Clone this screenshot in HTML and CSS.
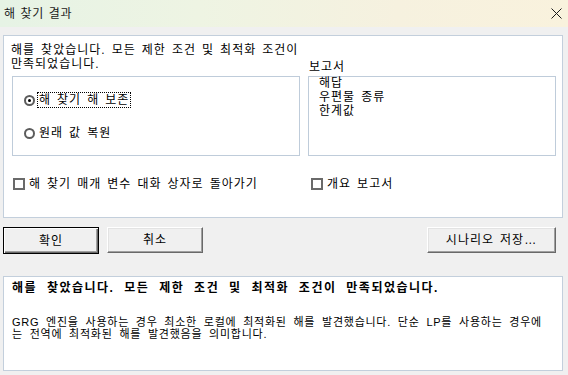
FILE: index.html
```html
<!DOCTYPE html>
<html lang="ko">
<head>
<meta charset="utf-8">
<title>해 찾기 결과</title>
<link rel="stylesheet" href="styles.css">
</head>
<body>
<div class="window">
  <div class="titlebar">
    <span class="title">해 찾기 결과</span>
    <svg class="close" width="11" height="11" viewBox="0 0 11 11"><path d="M0.5 0.5 L10.5 10.5 M10.5 0.5 L0.5 10.5" stroke="#1a1a1a" stroke-width="1" fill="none"/></svg>
  </div>
  <div class="content">
    <section class="panel top">
      <div class="grid">
        <p class="heading">해를 찾았습니다. 모든 제한 조건 및 최적화 조건이<br>만족되었습니다.</p>
        <div class="label">보고서</div>
        <div class="box options">
          <div class="radio"><span class="ring checked"></span><span class="text focus">해 찾기 해 보존</span></div>
          <div class="radio"><span class="ring"></span><span class="text">원래 값 복원</span></div>
        </div>
        <ul class="box list">
          <li>해답</li>
          <li>우편물 종류</li>
          <li>한계값</li>
        </ul>
        <div class="check first"><span class="cbox"></span><span>해 찾기 매개 변수 대화 상자로 돌아가기</span></div>
        <div class="check second"><span class="cbox"></span><span>개요 보고서</span></div>
      </div>
    </section>
    <div class="buttons">
      <button class="btn default">확인</button>
      <button class="btn cancel">취소</button>
      <button class="btn scenario">시나리오 저장…</button>
    </div>
    <section class="panel bottom">
      <p class="msg-title">해를 찾았습니다. 모든 제한 조건 및 최적화 조건이 만족되었습니다.</p>
      <p class="msg-body">GRG 엔진을 사용하는 경우 최소한 로컬에 최적화된 해를 발견했습니다. 단순 LP를 사용하는 경우에<br>는 전역에 최적화된 해를 발견했음을 의미합니다.</p>
    </section>
  </div>
</div>
</body>
</html>
```
FILE: styles.css
```css
* { box-sizing: border-box; }
html, body {
  margin: 0;
  padding: 0;
  background: #f0f0f0;
}
body {
  width: 568px;
  height: 375px;
  overflow: hidden;
  font-family: "Liberation Sans", "Noto Sans CJK KR", sans-serif;
  font-size: 12px;
  line-height: 14px;
  color: #000;
  letter-spacing: 1px;
  word-spacing: 1.7px;
}
p, ul { margin: 0; padding: 0; }
.titlebar {
  height: 27px;
  display: flex;
  align-items: center;
  justify-content: space-between;
  padding: 0 6px 0 4px;
  background: linear-gradient(90deg, #e6f3e5 0%, #eef4e3 35%, #f6f1df 70%, #f9f2dd 100%);
}
.title {
  color: #1a1a1a;
  letter-spacing: 0.6px;
  word-spacing: 1px;
}
.close { display: block; margin-top: -1px; }
.content {
  padding: 8px 5px 0 3px;
}
.panel {
  background: #fff;
  border: 1px solid #c3cfdc;
}
.panel.top {
  height: 183px;
  padding: 7px 0 0 8px;
}
.grid {
  display: grid;
  grid-template-columns: 288px 248px;
  grid-template-rows: auto 80px auto;
  column-gap: 8px;
}
.heading {
  white-space: nowrap;
  margin: 0 0 5px -1px;
}
.label {
  align-self: end;
  padding-left: 1px;
  margin-bottom: 2px;
}
.box {
  border: 1px solid #bfccda;
  background: #fff;
}
.options {
  padding: 16px 0 0 11px;
  display: flex;
  flex-direction: column;
  gap: 19px;
}
.radio {
  display: flex;
  align-items: center;
  height: 14px;
}
.ring {
  width: 11px;
  height: 11px;
  border: 2px solid #5c5c5c;
  border-radius: 50%;
  position: relative;
  flex: none;
}
.ring.checked::after {
  content: "";
  position: absolute;
  left: 2px;
  top: 2px;
  width: 3px;
  height: 3px;
  background: #000;
  border-radius: 50%;
}
.text {
  display: block;
  margin-left: 3px;
  padding: 0 1px;
  height: 14px;
}
.focus {
  outline: 1px dotted #000;
  outline-offset: 0;
}
.list {
  list-style: none;
  padding: 0 0 0 10px;
}
.list li {
  margin-top: -1px;
  height: 14px;
}
.list li + li { margin-top: 0; }
.check {
  margin-top: 21px;
  display: flex;
  align-items: center;
  height: 14px;
}
.check.first { margin-left: 1px; }
.check.second { margin-left: 3px; }
.cbox {
  width: 12px;
  height: 12px;
  border: 2px solid #6a6a6a;
  background: #fff;
  margin-right: 4px;
  flex: none;
}
.buttons {
  display: flex;
  margin-top: 9px;
  height: 27px;
  align-items: flex-start;
}
.btn {
  font-family: inherit;
  font-size: 12px;
  line-height: 14px;
  letter-spacing: 1px;
  word-spacing: 1.7px;
  color: #000;
  background: #f0f0f0;
  padding: 0;
  margin: 0;
  border: 1px solid;
  border-color: #fff #696969 #696969 #fff;
  box-shadow: inset -1px -1px 0 #a0a0a0, inset 1px 1px 0 #e3e3e3;
  width: 96px;
  height: 26px;
}
.btn.default {
  height: 27px;
  border: 1px solid #000;
  box-shadow: inset 1px 1px 0 #fff, inset -1px -1px 0 #696969, inset -2px -2px 0 #a0a0a0;
}
.btn.cancel { margin-left: 8px; }
.btn.scenario {
  margin-left: auto;
  margin-right: 7px;
  width: 129px;
}
.panel.bottom {
  margin-top: 22px;
  height: 95px;
  padding: 4px 0 0 8px;
}
.msg-title {
  font-weight: bold;
  letter-spacing: 1.5px;
  word-spacing: 5px;
  white-space: nowrap;
}
.msg-body {
  margin-top: 21px;
  font-size: 11px;
  line-height: 12px;
  letter-spacing: 0.75px;
  word-spacing: 3px;
  white-space: nowrap;
}
```
